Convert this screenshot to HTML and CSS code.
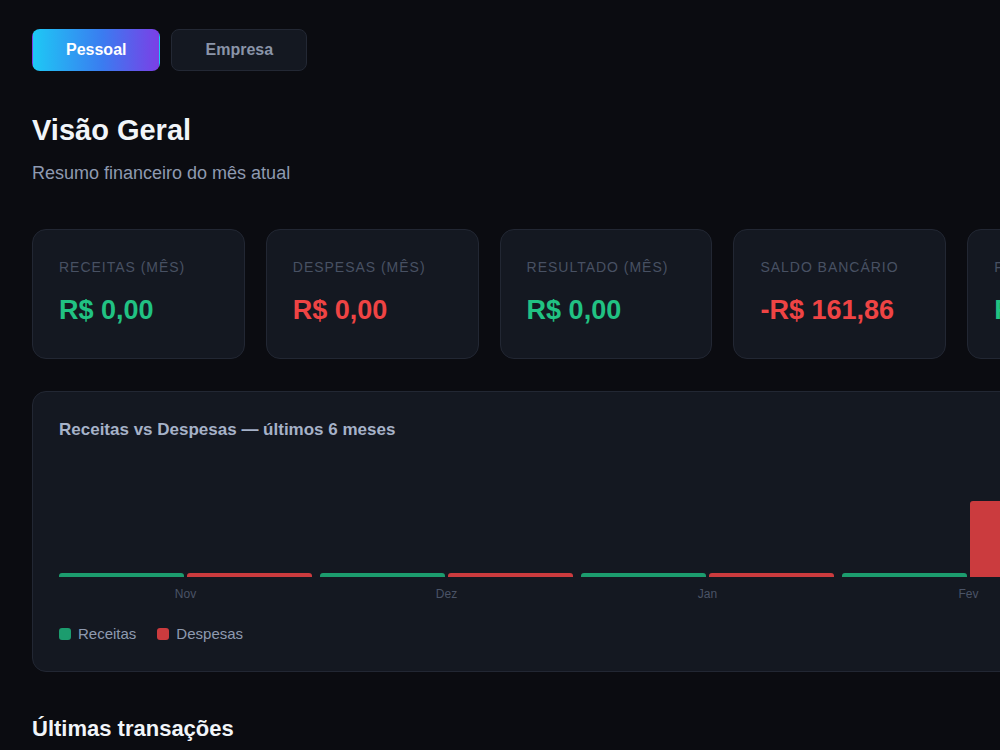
FILE: index.html
```html
<!DOCTYPE html>
<html lang="pt-BR">
<head>
    <meta charset="UTF-8">
    <meta name="viewport" content="width=device-width, initial-scale=1.0">
    <title>Visão Geral</title>
    <link rel="stylesheet" href="styles.css">
</head>
<body>

<div class="page">

    <!-- Seletor de perfil -->
    <div class="tabs">
        <button class="tab active">Pessoal</button>
        <button class="tab">Empresa</button>
    </div>

    <h1>Visão Geral</h1>
    <p class="subtitle">Resumo financeiro do mês atual</p>

    <!-- Cards de resumo -->
    <div class="cards">
        <div class="card">
            <div class="card-label">Receitas (mês)</div>
            <div class="card-value positive">R$ 0,00</div>
        </div>
        <div class="card">
            <div class="card-label">Despesas (mês)</div>
            <div class="card-value negative">R$ 0,00</div>
        </div>
        <div class="card">
            <div class="card-label">Resultado (mês)</div>
            <div class="card-value positive">R$ 0,00</div>
        </div>
        <div class="card">
            <div class="card-label">Saldo bancário</div>
            <div class="card-value negative">-R$ 161,86</div>
        </div>
        <div class="card">
            <div class="card-label">Faturas</div>
            <div class="card-value positive">R$ 0,00</div>
        </div>
    </div>

    <!-- Gráfico -->
    <div class="chart-card">
        <h3>Receitas vs Despesas — últimos 6 meses</h3>
        <div class="chart">
            <div class="month">
                <div class="bars">
                    <div class="bar income" style="height: 4px"></div>
                    <div class="bar expense" style="height: 4px"></div>
                </div>
                <span>Nov</span>
            </div>
            <div class="month">
                <div class="bars">
                    <div class="bar income" style="height: 4px"></div>
                    <div class="bar expense" style="height: 4px"></div>
                </div>
                <span>Dez</span>
            </div>
            <div class="month">
                <div class="bars">
                    <div class="bar income" style="height: 4px"></div>
                    <div class="bar expense" style="height: 4px"></div>
                </div>
                <span>Jan</span>
            </div>
            <div class="month">
                <div class="bars">
                    <div class="bar income" style="height: 4px"></div>
                    <div class="bar expense" style="height: 76px"></div>
                </div>
                <span>Fev</span>
            </div>
        </div>
        <div class="legend">
            <span class="legend-item"><i class="dot income"></i>Receitas</span>
            <span class="legend-item"><i class="dot expense"></i>Despesas</span>
        </div>
    </div>

    <h2>Últimas transações</h2>

</div>

</body>
</html>
```

FILE: styles.css
```css
/* General styles */
html, body {
    overflow-x: hidden;
}

body {
    font-family: "Liberation Sans", Arial, sans-serif;
    background-color: #0b0c11;
    color: #f1f5f9;
    margin: 0;
    padding: 0;
}

.page {
    width: 1148px;
    padding: 29px 32px;
}

/* Tabs */
.tabs {
    display: flex;
    gap: 11px;
}

.tab {
    height: 42px;
    padding: 0 33px;
    border-radius: 8px;
    border: 1px solid #232834;
    background-color: #141821;
    color: #8a94a8;
    font-family: "Liberation Sans", Arial, sans-serif;
    font-size: 16px;
    font-weight: bold;
}

.tab.active {
    border-color: transparent;
    background: linear-gradient(90deg, #1ec8f5, #3a7cf0 55%, #7b3fe6);
    color: #fff;
}

/* Heading */
h1 {
    margin: 42px 0 0;
    font-size: 29px;
    line-height: 34px;
}

.subtitle {
    margin: 16px 0 0;
    font-size: 18px;
    line-height: 21px;
    color: #8e9ab0;
}

/* Summary cards */
.cards {
    display: grid;
    grid-template-columns: repeat(5, 1fr);
    gap: 21px;
    margin-top: 45px;
}

.card {
    background-color: #141821;
    border: 1px solid #222733;
    border-radius: 14px;
    padding: 29px 26px 32px;
    white-space: nowrap;
}

.card-label {
    font-size: 14px;
    line-height: 16px;
    letter-spacing: 0.07em;
    text-transform: uppercase;
    color: #485163;
}

.card-value {
    margin-top: 20px;
    font-size: 27px;
    line-height: 31px;
    font-weight: bold;
}

.positive {
    color: #21c283;
}

.negative {
    color: #ef4444;
}

/* Chart */
.chart-card {
    margin-top: 32px;
    background-color: #141821;
    border: 1px solid #222733;
    border-radius: 14px;
    padding: 28px 26px 29px;
}

.chart-card h3 {
    margin: 0 0 17px;
    font-size: 17px;
    line-height: 20px;
    color: #a6b2c8;
}

.chart {
    display: flex;
    gap: 8px;
}

.month {
    display: flex;
    flex-direction: column;
    align-items: center;
    width: 253px;
}

.bars {
    display: flex;
    align-items: flex-end;
    gap: 3px;
    width: 100%;
    height: 120px;
}

.bar {
    flex: 1;
    border-radius: 3px 3px 0 0;
}

.bar.income {
    background-color: #1c9c6e;
}

.bar.expense {
    background-color: #cb3b3e;
}

.month span {
    margin-top: 10px;
    font-size: 12px;
    line-height: 14px;
    color: #4a5366;
}

.legend {
    display: flex;
    gap: 21px;
    margin-top: 24px;
}

.legend-item {
    display: flex;
    align-items: center;
    gap: 7px;
    font-size: 15px;
    line-height: 17px;
    color: #8e9ab0;
}

.dot {
    width: 12px;
    height: 12px;
    border-radius: 3px;
}

.dot.income {
    background-color: #1c9c6e;
}

.dot.expense {
    background-color: #cb3b3e;
}

h2 {
    margin: 44px 0 0;
    font-size: 22px;
    line-height: 25px;
}
```
